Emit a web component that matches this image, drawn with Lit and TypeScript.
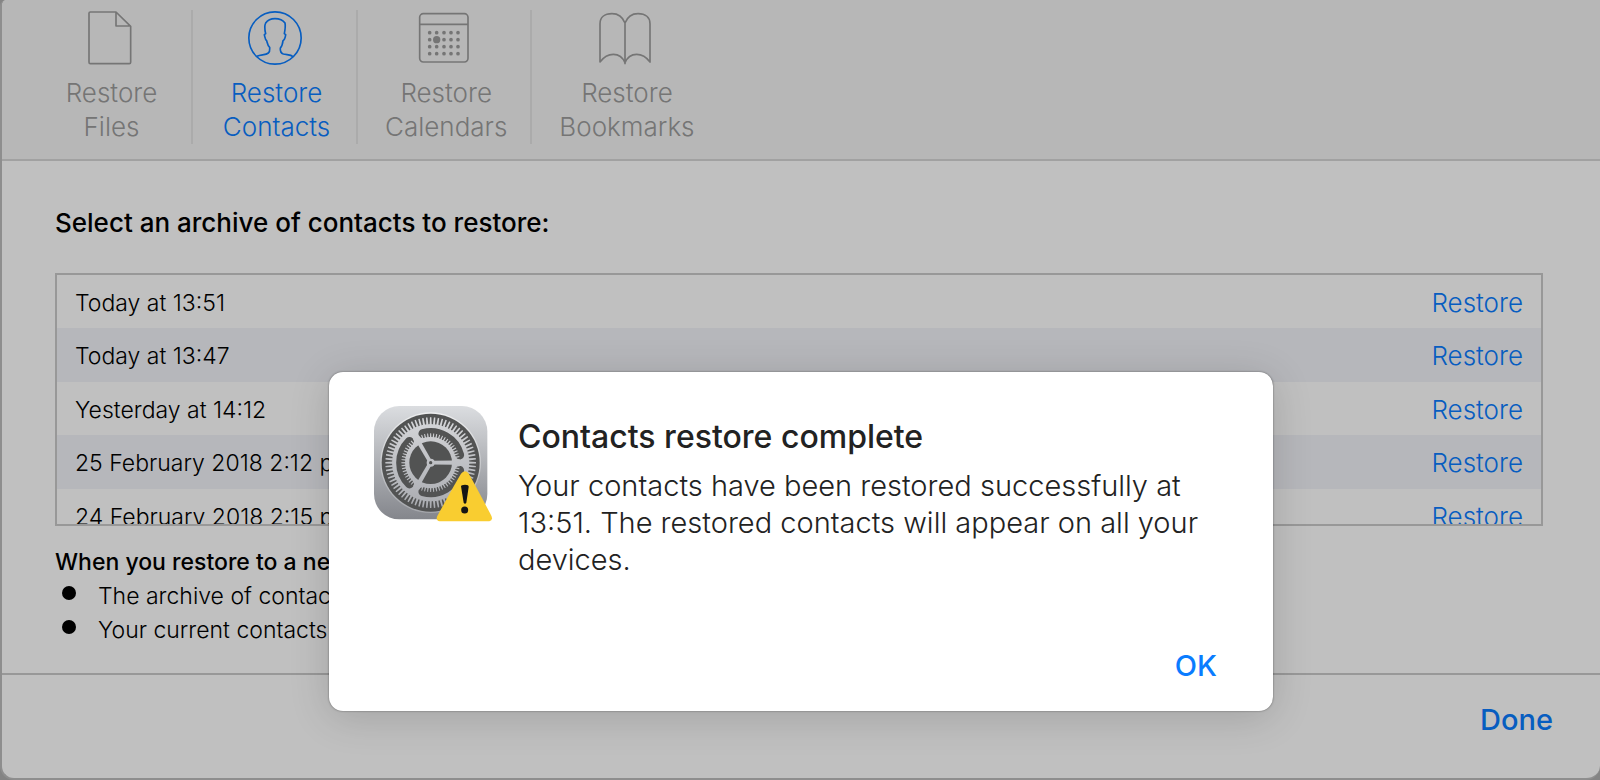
import { LitElement, html, svg, css, nothing } from "lit";
import { customElement, state } from "lit/decorators.js";
import { classMap } from "lit/directives/class-map.js";

const fileIcon = svg`<path d="M270 37H347L391 80V188Q391 192 387 192H270Q266 192 266 188V41Q266 37 270 37Z M347 37V79H391"/>`;

const contactIcon = svg`
  <circle cx="825" cy="115" r="78.5"/>
  <path d="M771 170C782 164 797 167 805 160C811 155 809 149 809 143C803 138 802 130 800 123C795 120 795 112 793 105L797 102C794 90 794 76 797 70C803 61 814 57 825 57C838 57 850 63 855 70C857 80 855 92 853 102L857 105C856 112 855 120 849 123C848 133 847 139 841 145C840 155 841 160 850 163C861 166 872 164 879 171"/>`;

const calendarIcon = svg`
  <rect x="182" y="42" width="145" height="145" rx="11"/>
  <path d="M182 74H327"/>
  ${[99, 120, 141, 162].map((y) =>
    [212, 233, 255, 276, 297].map(
      (x) => svg`<circle class="dot" cx="${x}" cy="${y}" r="${x === 233 && y === 120 ? 11 : 5.5}"/>`
    )
  )}`;

const bookIcon = svg`
  <path d="M797 70C789 50 778 42 758 42C735 42 722 54 722 72V187C736 168 748 164 762 164C779 164 790 172 797 189C804 172 815 164 832 164C846 164 858 168 872 187V72C872 54 859 42 836 42C816 42 805 50 797 70V194"/>`;

const tabs = [
  { id: "files", name: "Files", box: "248 34 162 162", icon: fileIcon },
  { id: "contacts", name: "Contacts", box: "744 34 162 162", icon: contactIcon },
  { id: "calendars", name: "Calendars", box: "174 34 162 162", icon: calendarIcon },
  { id: "bookmarks", name: "Bookmarks", box: "716 34 162 162", icon: bookIcon },
];

const archives = [
  "Today at 13:51",
  "Today at 13:47",
  "Yesterday at 14:12",
  "25 February 2018 2:12 pm",
  "24 February 2018 2:15 pm",
];

const at = (r: number, deg: number) => {
  const a = (deg * Math.PI) / 180;
  return `${(170 + r * Math.cos(a)).toFixed(2)} ${(170 + r * Math.sin(a)).toFixed(2)}`;
};

// A ring of narrow tapered teeth between two radii.
const teeth = (count: number, inner: number, outer: number, base: number, tip: number) =>
  Array.from({ length: count }, (_, i) => {
    const d = (i * 360) / count;
    return `M${at(inner, d - base)}L${at(outer, d - tip)}L${at(outer, d + tip)}L${at(inner, d + base)}Z`;
  }).join("");

@customElement("settings-icon")
export class SettingsIcon extends LitElement {
  static styles = css`
    :host { display: block; width: 119px; height: 117px; }
    svg { display: block; width: 100%; height: 100%; }
  `;
  render() {
    return html`<svg viewBox="0 0 357 351" role="img" aria-label="Settings warning">
      <defs>
        <linearGradient id="plate" x1="0" y1="0" x2="0" y2="1">
          <stop offset="0" stop-color="#dbdde0" />
          <stop offset="1" stop-color="#84868c" />
        </linearGradient>
        <linearGradient id="metal" gradientUnits="userSpaceOnUse" x1="0" y1="30" x2="0" y2="310">
          <stop offset="0" stop-color="#d6d7da" />
          <stop offset="1" stop-color="#a9abb0" />
        </linearGradient>
        <linearGradient id="rim" x1="0" y1="0" x2="0" y2="1">
          <stop offset="0" stop-color="#eeeff0" />
          <stop offset="1" stop-color="#a4a6ab" />
        </linearGradient>
      </defs>
      <rect width="340" height="340" rx="76" fill="url(#plate)" />
      <circle cx="170" cy="170" r="151" fill="url(#rim)" />
      <circle cx="170" cy="170" r="147" fill="#525353" />
      <path d=${teeth(72, 114, 136, 1.6, 0.9)} fill="url(#metal)" />
      <circle cx="170" cy="170" r="116" fill="url(#metal)" />
      ${[-60, 60, 180].map(
        (d) => svg`<path d="M${at(90, d - 45)}A90 90 0 0 1 ${at(90, d + 45)}"
          fill="none" stroke="#525353" stroke-width="27" stroke-linecap="round"/>`
      )}
      <path d=${teeth(60, 74, 88, 1.8, 0.9)} fill="url(#metal)" />
      <circle cx="170" cy="170" r="76" fill="url(#metal)" />
      <circle cx="170" cy="170" r="64" fill="#525353" />
      ${[0, 120, 240].map(
        (d) => svg`<path d="M${at(8, d - 45)}L${at(72, d - 5)}L${at(72, d + 5)}L${at(8, d + 45)}Z" fill="url(#metal)"/>`
      )}
      <circle cx="170" cy="170" r="12" fill="url(#metal)" />
      <circle cx="170" cy="170" r="5" fill="#525353" />
      <path
        d="M263 201Q273 190 283 201Q287 206 352 329Q358 343 346 346H197Q184 344 190 330Q256 209 263 201Z"
        fill="#f9cd30"
      />
      <path d="M261 241Q261 236 273 236Q285 236 284 243L277 290Q273 296 269 290Z" fill="#151515" />
      <circle cx="272" cy="312" r="10.5" fill="#151515" />
    </svg>`;
  }
}

@customElement("app-root")
export class AppRoot extends LitElement {
  static styles = css`
    :host {
      display: block;
      font-family: Inter, "Liberation Sans", sans-serif;
      font-weight: 300;
      color: #000;
      background: #b0b0b0;
    }
    * { box-sizing: border-box; }
    button {
      appearance: none;
      border: 0;
      padding: 0;
      background: none;
      font: inherit;
      color: #0a7cff;
      cursor: pointer;
    }
    h1, h2, h3, p, ul { margin: 0; padding: 0; font-weight: 500; }
    .page { position: relative; min-height: 100vh; display: flex; }
    .window {
      flex: 1;
      display: flex;
      flex-direction: column;
      border-left: 2px solid #bdbdbd;
      border-bottom: 2px solid #bdbdbd;
      border-radius: 6px 0 14px 14px;
      background: #fff;
      overflow: hidden;
    }
    .tabs {
      display: flex;
      padding: 10px 0 15px 26px;
      border-bottom: 2px solid #d6d6d6;
      background: #f4f4f4;
    }
    .tab {
      display: flex;
      flex-direction: column;
      align-items: center;
      gap: 11px;
      min-width: 165px;
      padding: 1px 23px 0 27px;
      border-right: 2px solid #e4e4e4;
      font-size: 26px;
      line-height: 34px;
      color: #9c9c9c;
    }
    .tab:last-child { border-right: 0; }
    .tab.active { color: #0a7cff; }
    .tab svg {
      width: 54px;
      height: 54px;
      margin-right: 4px;
      fill: none;
      stroke: currentColor;
      stroke-width: 5;
      stroke-linejoin: round;
    }
    .tab .dot { fill: currentColor; stroke: none; }
    .content { padding: 44px 57px 26px 53px; }
    .title { font-size: 26px; line-height: 36px; }
    .list {
      height: 253px;
      margin: 32px 0 19px;
      border: 2px solid #cacaca;
      overflow: hidden;
    }
    table { width: 100%; border-collapse: collapse; }
    td { height: 53px; padding: 2px 18px 0; font-size: 23px; line-height: 32px; }
    tr:nth-child(even) td { height: 54px; background: #f2f4f9; }
    td:last-child { text-align: right; font-size: 26px; }
    .note { font-size: 23px; line-height: 34px; }
    .note h3 { font-size: 23px; }
    .note li { display: flex; gap: 22px; padding-left: 7px; font-weight: 300; }
    .note li::before {
      content: "";
      width: 14px;
      height: 14px;
      margin-top: 7px;
      border-radius: 50%;
      background: #000;
    }
    .foot {
      flex: 1;
      display: flex;
      justify-content: flex-end;
      align-items: flex-start;
      padding: 25px 47px;
      border-top: 2px solid #cacaca;
    }
    .foot button, .actions button { font-size: 29px; line-height: 40px; font-weight: 500; }
    .overlay {
      position: absolute;
      inset: 0;
      display: flex;
      justify-content: center;
      align-items: flex-end;
      padding: 0 0 69px 2px;
      background: rgba(0, 0, 0, 0.247);
    }
    .dialog {
      width: 944px;
      padding: 34px 56px 25px 45px;
      border-radius: 14px;
      background: #fff;
      box-shadow: 0 0 2px rgba(0, 0, 0, 0.5), 0 6px 40px rgba(0, 0, 0, 0.16);
      color: #222;
    }
    .message { display: flex; gap: 25px; min-height: 212px; }
    .text { flex: 1; padding-top: 11px; }
    .text h2 { font-size: 32px; line-height: 40px; margin-bottom: 10px; }
    .text p { font-size: 29px; line-height: 37px; font-weight: 300; }
    .actions { display: flex; justify-content: flex-end; margin-top: 28px; }
  `;

  @state() private active = "contacts";
  @state() private complete = true;

  render() {
    return html`<div class="page">
      <main class="window">
        <nav class="tabs">
          ${tabs.map(
            (t) => html`<button
              class=${classMap({ tab: true, active: t.id === this.active })}
              @click=${() => (this.active = t.id)}
            >
              <svg viewBox=${t.box} aria-hidden="true">${t.icon}</svg>
              <span>Restore<br />${t.name}</span>
            </button>`
          )}
        </nav>
        <section class="content">
          <h1 class="title">Select an archive of contacts to restore:</h1>
          <div class="list">
            <table>
              ${archives.map((a) => html`<tr><td>${a}</td><td><button>Restore</button></td></tr>`)}
            </table>
          </div>
          <div class="note">
            <h3>When you restore to a new archive:</h3>
            <ul>
              <li>The archive of contacts</li>
              <li>Your current contacts</li>
            </ul>
          </div>
        </section>
        <footer class="foot"><button>Done</button></footer>
      </main>
      ${this.complete
        ? html`<div class="overlay">
            <section class="dialog" role="alertdialog" aria-modal="true" aria-labelledby="done-title">
              <div class="message">
                <settings-icon></settings-icon>
                <div class="text">
                  <h2 id="done-title">Contacts restore complete</h2>
                  <p>
                    Your contacts have been restored successfully at 13:51. The restored contacts
                    will appear on all your devices.
                  </p>
                </div>
              </div>
              <div class="actions">
                <button @click=${() => (this.complete = false)}>OK</button>
              </div>
            </section>
          </div>`
        : nothing}
    </div>`;
  }
}
